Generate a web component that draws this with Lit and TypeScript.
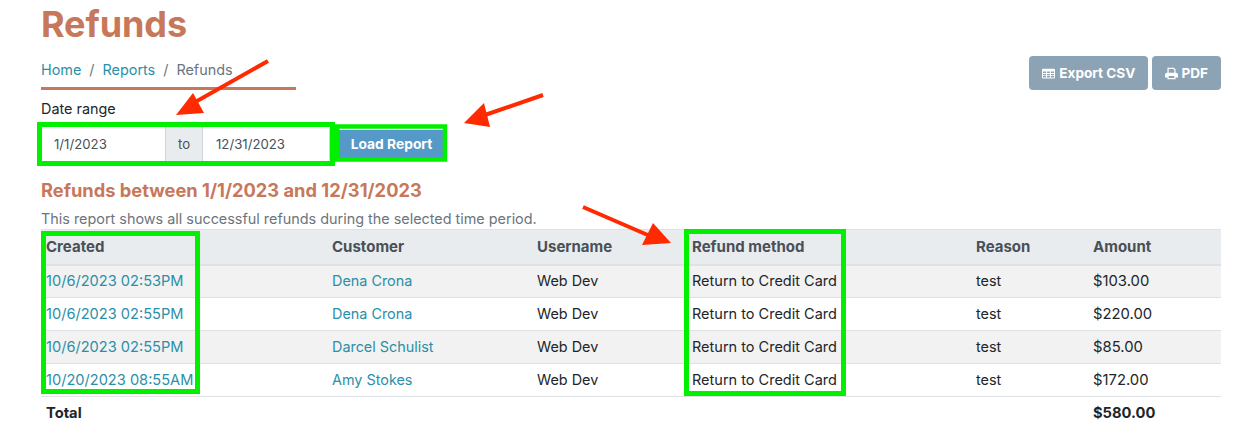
import { LitElement, html, css, svg } from "lit";
import { customElement } from "lit/decorators.js";

const rows = [
  ["10/6/2023 02:53PM", "Dena Crona", "$103.00"],
  ["10/6/2023 02:55PM", "Dena Crona", "$220.00"],
  ["10/6/2023 02:55PM", "Darcel Schulist", "$85.00"],
  ["10/20/2023 08:55AM", "Amy Stokes", "$172.00"],
];

const RED = "#ff2a00";
const GREEN = "#00f000";

const arrow = (x1: number, y1: number, x2: number, y2: number, head: string) => svg`
  <line x1=${x1} y1=${y1} x2=${x2} y2=${y2} stroke=${RED} stroke-width="4"/>
  <polygon points=${head} fill=${RED}/>`;

const box = (x: number, y: number, w: number, h: number, sw = 5) => svg`
  <rect x=${x} y=${y} width=${w} height=${h} fill="none" stroke=${GREEN} stroke-width=${sw}/>`;

@customElement("app-root")
export class AppRoot extends LitElement {
  static styles = css`
    :host {
      display: block;
      position: relative;
      width: 1233px;
      height: 437px;
      overflow: hidden;
      background: #fff;
      font-family: Inter, "Liberation Sans", sans-serif;
      font-size: 14.4px;
      color: #212529;
    }
    .page { padding: 0 12px 0 41px; display: flex; flex-direction: column; }
    h1 { margin: 4px 0 0; font-size: 36px; line-height: 40px; font-weight: 700; color: #c8785a; letter-spacing: -0.1px; }
    .bar { display: flex; justify-content: space-between; align-items: flex-start; margin-top: 12px; }
    .crumbs { width: 255px; height: 34px; box-sizing: border-box; border-bottom: 3px solid #c8785a; display: flex; gap: 8px; line-height: 28px; color: #6c757d; }
    a { color: #2a8fa8; text-decoration: none; }
    .sep { color: #6c757d; }
    .actions { display: flex; gap: 4px; }
    .btn { height: 34px; box-sizing: border-box; display: flex; align-items: center; gap: 4px; padding: 0 13px; background: #8ca3b5; color: #fff; font-weight: 700; font-size: 13.6px; border-radius: 4px; }
    .btn.pdf { gap: 3px; }
    .btn svg { width: 13px; height: 13px; fill: #fff; }
    label { display: block; margin-top: 10px; line-height: 18px; }
    .filters { display: flex; align-items: center; margin-top: 9px; height: 34px; }
    .group { display: flex; width: 288px; height: 34px; margin-left: 1px; box-sizing: border-box; border-right: 1px solid #ced4da; border-radius: 0 3px 3px 0; font-size: 13.2px; }
    .field { flex: 1; padding-left: 13px; line-height: 34px; color: #495057; background: #fff; }
    .field.a { flex: 0 0 111px; padding-left: 12px; }
    .to { flex: 0 0 38px; text-align: center; line-height: 34px; background: #e9ecef; color: #495057; border: solid #ced4da; border-width: 0 1px; box-sizing: border-box; }
    .load { margin-left: 9px; width: 104px; padding-left: 1px; box-sizing: border-box; height: 28px; background: #5499c7; color: #fff; font-weight: 700; font-size: 13.8px; text-align: center; line-height: 28px; }
    h3 { margin: 18px 0 0; font-size: 18.3px; line-height: 22px; font-weight: 700; color: #c8785a; }
    p { margin: 9px 0 0; line-height: 18px; color: #6c757d; }
    table { width: 1180px; margin-top: 1px; table-layout: fixed; border-collapse: collapse; }
    th, td { text-align: left; padding: 0 5px 2px; height: 33px; box-sizing: border-box; font-weight: 400; border-bottom: 1px solid #dee2e6; white-space: nowrap; }
    td.date { font-size: 14.6px; padding-bottom: 0; }
    td.method { font-size: 14.5px; }
    td.amt { font-size: 14.8px; padding-bottom: 0; }
    thead th { height: 35px; padding-bottom: 0; background: #e9ecef; color: #495057; font-weight: 700; font-size: 15px; border-top: 1px solid #dee2e6; border-bottom: 2px solid #dee2e6; }
    tbody tr:nth-child(odd) td { background: #f2f2f2; }
    tfoot td { font-weight: 700; border-bottom: 0; height: 34px; font-size: 14.7px; padding-bottom: 1px; }
    .overlay { position: absolute; inset: 0; width: 100%; height: 100%; pointer-events: none; }
  `;

  render() {
    return html`
      <div class="page">
        <h1>Refunds</h1>
        <div class="bar">
          <div class="crumbs">
            <a href="#">Home</a><span class="sep">/</span><a href="#">Reports</a><span class="sep">/</span><span>Refunds</span>
          </div>
          <div class="actions">
            <div class="btn">
              <svg viewBox="0 0 16 16"><path fill-rule="evenodd" d="M1.5 2h13A1.5 1.5 0 0 1 16 3.5v9a1.5 1.5 0 0 1-1.5 1.5h-13A1.5 1.5 0 0 1 0 12.500v-9A1.500 1.500 0 0 1 1.500 2zM1.200 5.500V7.500H5V5.500zM6.200 5.500V7.500H9.800V5.500zM11 5.500V7.500H14.800V5.500zM1.200 8.500V10.200H5V8.500zM6.200 8.500V10.200H9.800V8.500zM11 8.500V10.200H14.800V8.500zM1.200 11.200V12.800H5V11.200zM6.200 11.200V12.800H9.800V11.200zM11 11.200V12.800H14.800V11.200z"/></svg>
              Export CSV
            </div>
            <div class="btn pdf">
              <svg viewBox="0 0 16 16"><path fill-rule="evenodd" d="M3 1h8l2 2v4h.5A2.500 2.500 0 0 1 16 9.500V13h-3v2H3v-2H0V9.500A2.500 2.500 0 0 1 2.500 7H3zM4.500 2.500V7h7V3.600L10.400 2.500zM4.500 11v2.500h7V11z"/></svg>
              PDF
            </div>
          </div>
        </div>
        <label>Date range</label>
        <div class="filters">
          <div class="group">
            <div class="field a">1/1/2023</div>
            <div class="to">to</div>
            <div class="field">12/31/2023</div>
          </div>
          <div class="load">Load Report</div>
        </div>
        <h3>Refunds between 1/1/2023 and 12/31/2023</h3>
        <p>This report shows all successful refunds during the selected time period.</p>
        <table>
          <colgroup>
            <col style="width:286px" /><col style="width:205px" /><col style="width:155px" /><col style="width:284px" /><col style="width:117px" /><col style="width:133px" />
          </colgroup>
          <thead>
            <tr><th>Created</th><th>Customer</th><th>Username</th><th>Refund method</th><th>Reason</th><th>Amount</th></tr>
          </thead>
          <tbody>
            ${rows.map(
              (r) => html`<tr>
                <td class="date"><a href="#">${r[0]}</a></td>
                <td><a href="#">${r[1]}</a></td>
                <td>Web Dev</td>
                <td class="method">Return to Credit Card</td>
                <td>test</td>
                <td class="amt">${r[2]}</td>
              </tr>`
            )}
          </tbody>
          <tfoot>
            <tr><td>Total</td><td></td><td></td><td></td><td></td><td>$580.00</td></tr>
          </tfoot>
        </table>
      </div>
      <svg class="overlay" viewBox="0 0 1233 437">
        ${box(39.5, 124.5, 293, 39)}
        ${box(337, 126.5, 108, 33, 4.5)}
        ${box(43.5, 233.5, 154, 158)}
        ${box(686.5, 231.5, 157, 162)}
        ${arrow(268, 61, 190, 105, "176,115 193,93 204,113")}
        ${arrow(543, 95, 482, 116, "464,123 484,103 490,127")}
        ${arrow(583, 207, 650, 236, "671,243 653,223 642,245")}
      </svg>
    `;
  }
}
